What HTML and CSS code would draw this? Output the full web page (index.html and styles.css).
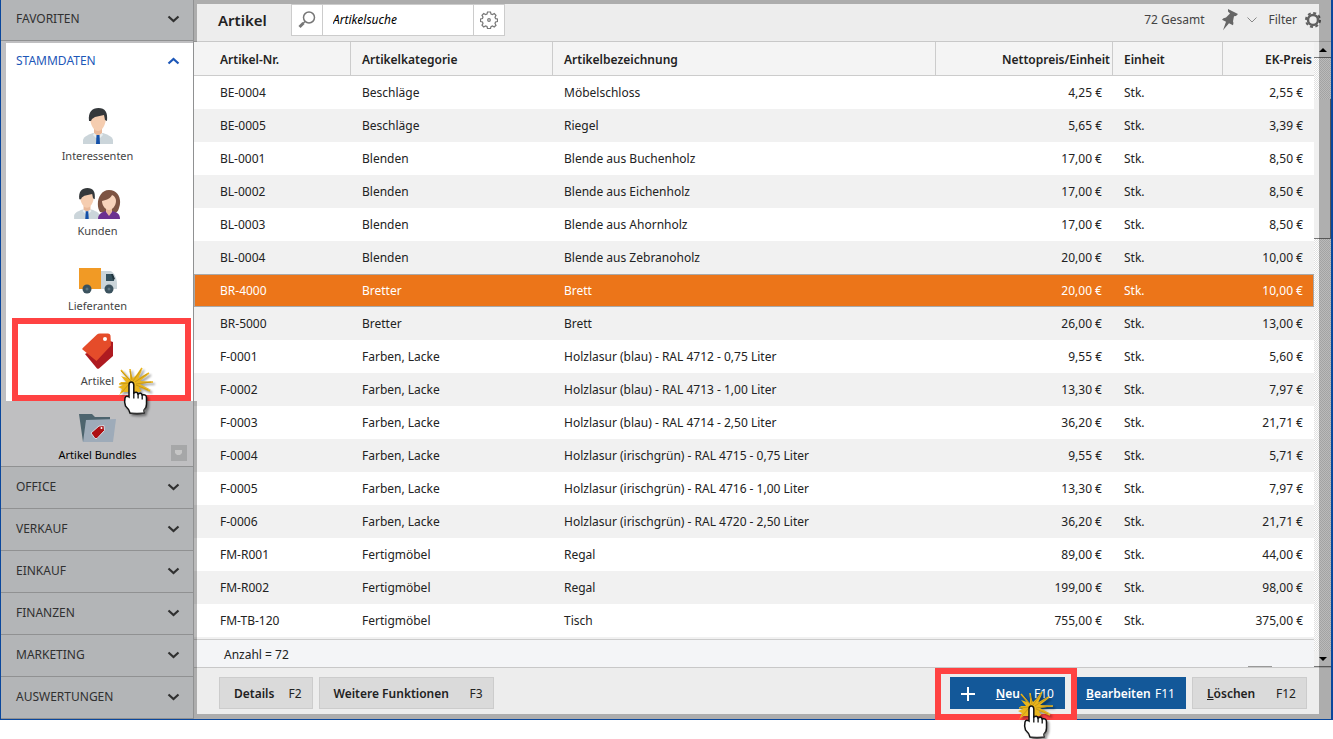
FILE: index.html
```html
<!DOCTYPE html>
<html lang="de">
<head>
<meta charset="utf-8">
<title>Artikel</title>
<link rel="stylesheet" href="styles.css">
</head>
<body>
<svg class="defs" aria-hidden="true">
  <symbol id="down" viewBox="0 0 12 8"><path d="M1 1.500 6 6l5-4.500" fill="none" stroke="currentColor" stroke-width="2.200"/></symbol>
  <symbol id="up" viewBox="0 0 12 8"><path d="M1 6.500 6 2l5 4.500" fill="none" stroke="currentColor" stroke-width="2.200"/></symbol>
  <symbol id="man" viewBox="0 0 30 36">
    <path d="M0 36v-4c1-4 7-6 10-7h10c3 1 9 3 10 7v4z" fill="#cbd5da"/>
    <path d="M11 21h8v5l-4 2-4-2z" fill="#e9b99a"/>
    <path d="m11 25 4 3 4-3 1 2-3 3h-4l-3-3z" fill="#e8eef0"/>
    <path d="M13.500 27h3l.5 9h-4z" fill="#1450a8"/>
    <path d="M7 9c0-6 4-8 8-8s8 2 8 8c0 8-4 14-8 14S7 17 7 9z" fill="#f5cdb0"/>
    <path d="M6 13C5 4 9 0 15.500 0S25 4 24 13l-2-1-1-5-9 2-3 2-1 2z" fill="#34383b"/>
  </symbol>
  <symbol id="woman" viewBox="0 0 24 29">
    <path d="M3 22C-2 14 2 0 12 0s13 10 10 18c-1 4-3 5-5 5H7z" fill="#7d5443"/>
    <path d="M1 29c0-5 4-7 8-8h6c5 1 8 3 8 8z" fill="#6b3190"/>
    <path d="M9 17h6v5l-3 4-3-4z" fill="#e9b99a"/>
    <path d="M5 11c5-1 9-3 10-6 3 1 4 4 4 6 0 5-4 9-7 9s-7-4-7-9z" fill="#f7d3bb"/>
  </symbol>
  <symbol id="truck" viewBox="0 0 38 26">
    <path d="M0 0h22v21H0z" fill="#f19a25"/><path d="M22 3h10c4 3 6 8 6 13v5H22z" fill="#cbd5da"/>
    <path d="M27 6h6l2 4v3h-8z" fill="#34505c"/><path d="M32 6h2l2 5-2 1z" fill="#20343d"/>
    <circle cx="8" cy="21" r="4.500" fill="#3b525e"/><circle cx="30" cy="21" r="4.500" fill="#3b525e"/>
    <circle cx="8" cy="21" r="1.500" fill="#5d7682"/><circle cx="30" cy="21" r="1.500" fill="#5d7682"/>
  </symbol>
  <symbol id="tags" viewBox="0 0 32 36">
    <path d="m3 21 25-13 3 1v14L17 35.500q-1 .5-2 0z" fill="#ae1a20"/>
    <path d="M15 1.500Q16 .5 18 .5l8 0q2 0 2.500 2l.5 10L14.500 28 .8 16.800q-1-.8 0-1.800z" fill="#e54c2a"/>
    <circle cx="23" cy="6" r="2" fill="#fff"/>
  </symbol>
  <symbol id="folder" viewBox="0 0 37 30">
    <path d="M0 1h13l3 3h15v25H4z" fill="#4d646e"/><path d="M7 7 37 6l-3 23H4z" fill="#9eabb9"/>
    <path d="m12 20 8-7 5-.5.500 5-7.500 8h-2z" fill="#ae0f12" stroke="#d3dce5" stroke-width="1"/><circle cx="22.500" cy="15" r="1" fill="#fff"/>
  </symbol>
  <symbol id="hand" viewBox="0 0 36 50">
    <path d="M12 13 12 6l3 6 9-8-4 9 11-5-9 7 13 1-13 2 11 6-12-3 1 5-18 0-3 4 3-7-4-2 5-2-3-3 6 0-5-6z" fill="#eab51c"/>
    <path d="M14 17 3 4m11 13L12 3m2 14L24 2M14 17 31 7M14 17l21-1M14 17l18 8M14 17 1 18m13-1L3 27m11-10 9 8" stroke="#eab51c" stroke-width="1.600"/>
    <path d="M13 15 3 5m11 9L12 5m3 10 8-11m-6 12L29 8M18 18l15-2M18 19l12 5M11 17l-9 1m9 0-7 8" stroke="#b08614" stroke-width=".6"/>
    <path d="M11 19q0-3 2.300-3t2.500 3v8q3.200-2 4.200 1 3.200-2 4.200 1 4.300-1 4.300 3v6q0 4-2.500 6v3q-7 1.500-14 0-1-4-4.500-7-1.500-4-.5-8 1-3 4-1z" fill="#fff" stroke="#111" stroke-width="1.500"/>
    <path d="M15.800 26v6.500m4.300-5v5m4.100-4v5" fill="none" stroke="#111" stroke-width="1.300"/>
    <path d="M12.500 46h12.500l2.500-5v4l-2 2.500h-12z" fill="#999" opacity=".5"/>
  </symbol>
</svg>

<div class="window">
  <nav class="sidebar" aria-label="Module">
    <button class="group first">FAVORITEN<svg><use href="#down"/></svg></button>
    <section class="open-group">
      <div class="bright">
        <button class="group active">STAMMDATEN<svg><use href="#up"/></svg></button>
        <a class="module" href="#"><svg class="ico-man"><use href="#man"/></svg><span>Interessenten</span></a>
        <a class="module" href="#"><span class="couple"><svg class="ico-man2"><use href="#man"/></svg><svg class="ico-woman"><use href="#woman"/></svg></span><span>Kunden</span></a>
        <a class="module" href="#"><svg class="ico-truck"><use href="#truck"/></svg><span>Lieferanten</span></a>
        <a class="module marked" href="#"><svg class="ico-tags"><use href="#tags"/></svg><span>Artikel</span><i class="callout callout-module"></i><svg class="hand hand-module"><use href="#hand"/></svg></a>
      </div>
      <a class="module bundles" href="#"><svg class="ico-folder"><use href="#folder"/></svg><span>Artikel Bundles</span><svg class="badge" viewBox="0 0 16 16"><path d="M0 0h16v16H0z" fill="#a6a7a8"/><path d="M4 5h7v3l-2 2H6L4 8z" fill="#c6c6c6"/></svg></a>
    </section>
    <button class="group">OFFICE<svg><use href="#down"/></svg></button>
    <button class="group">VERKAUF<svg><use href="#down"/></svg></button>
    <button class="group">EINKAUF<svg><use href="#down"/></svg></button>
    <button class="group">FINANZEN<svg><use href="#down"/></svg></button>
    <button class="group">MARKETING<svg><use href="#down"/></svg></button>
    <button class="group">AUSWERTUNGEN<svg><use href="#down"/></svg></button>
  </nav>

  <main class="main">
    <header class="toolbar">
      <h1>Artikel</h1>
      <div class="search">
        <button aria-label="Suchen"><svg width="18" height="18" viewBox="0 0 18 18" fill="none" stroke="#777"><circle cx="11" cy="6.500" r="5.500" stroke-width="1.500"/><path d="m7 10.500-2 2" stroke-width="1.500"/><path d="m5.500 12-4 4" stroke-width="3"/></svg></button>
        <input type="text" placeholder="Artikelsuche" aria-label="Artikelsuche">
        <button aria-label="Sucheinstellungen"><svg width="18" height="18" viewBox="0 0 18 18" fill="none" stroke="#777" stroke-width="1.200"><path d="M7.500 1h3l.5 2 1.500.6 1.800-1 1.700 1.700-1 2 .6 1.300 1.900.4v2.500l-2 .5-.5 1.500 1 1.800-1.800 1.700-1.800-1-1.400.6-.5 1.900H7.500l-.5-2-1.500-.5-1.800 1L2 14.200l1-1.800-.5-1.400-2-.5V8l2-.5.500-1.400-1-1.800L3.700 2.600l1.800 1L7 3z"/><circle cx="9" cy="9" r="1.300"/></svg></button>
      </div>
      <span class="total">72 Gesamt</span>
      <button class="pin" aria-label="Anheften"><svg width="18" height="22" viewBox="0 0 18 22" fill="#666"><path d="m7 0 10 5-2 2-2 .3-1 5q1 2 0 4l-4-2-6 7 3-8.500-4-2q1-2 4-2.300l4-4-2-2z"/></svg></button>
      <button class="more" aria-label="Mehr"><svg width="10" height="6" viewBox="0 0 10 6" fill="none" stroke="#888"><path d="m.5.5 4.500 4.500L9.500.5"/></svg></button>
      <button class="filter">Filter<svg width="16" height="16" viewBox="0 0 16 16" fill="none" stroke="#606060"><circle cx="8" cy="8" r="5" stroke-width="2.500"/><circle cx="8" cy="8" r="7" stroke-width="2" stroke-dasharray="3 2.498"/></svg></button>
    </header>

    <div class="content">
      <div class="listing">
        <table>
          <colgroup><col class="c-nr"><col class="c-kat"><col><col class="c-netto"><col class="c-einheit"><col class="c-ek"></colgroup>
          <thead><tr><th>Artikel-Nr.</th><th>Artikelkategorie</th><th>Artikelbezeichnung</th><th class="num">Nettopreis/Einheit</th><th>Einheit</th><th class="num">EK-Preis</th></tr></thead>
          <tbody>
            <tr><td>BE-0004</td><td>Beschläge</td><td>Möbelschloss</td><td class="num">4,25 €</td><td>Stk.</td><td class="num">2,55 €</td></tr>
            <tr><td>BE-0005</td><td>Beschläge</td><td>Riegel</td><td class="num">5,65 €</td><td>Stk.</td><td class="num">3,39 €</td></tr>
            <tr><td>BL-0001</td><td>Blenden</td><td>Blende aus Buchenholz</td><td class="num">17,00 €</td><td>Stk.</td><td class="num">8,50 €</td></tr>
            <tr><td>BL-0002</td><td>Blenden</td><td>Blende aus Eichenholz</td><td class="num">17,00 €</td><td>Stk.</td><td class="num">8,50 €</td></tr>
            <tr><td>BL-0003</td><td>Blenden</td><td>Blende aus Ahornholz</td><td class="num">17,00 €</td><td>Stk.</td><td class="num">8,50 €</td></tr>
            <tr><td>BL-0004</td><td>Blenden</td><td>Blende aus Zebranoholz</td><td class="num">20,00 €</td><td>Stk.</td><td class="num">10,00 €</td></tr>
            <tr class="selected"><td>BR-4000</td><td>Bretter</td><td>Brett</td><td class="num">20,00 €</td><td>Stk.</td><td class="num">10,00 €</td></tr>
            <tr><td>BR-5000</td><td>Bretter</td><td>Brett</td><td class="num">26,00 €</td><td>Stk.</td><td class="num">13,00 €</td></tr>
            <tr><td>F-0001</td><td>Farben, Lacke</td><td>Holzlasur (blau) - RAL 4712 - 0,75 Liter</td><td class="num">9,55 €</td><td>Stk.</td><td class="num">5,60 €</td></tr>
            <tr><td>F-0002</td><td>Farben, Lacke</td><td>Holzlasur (blau) - RAL 4713 - 1,00 Liter</td><td class="num">13,30 €</td><td>Stk.</td><td class="num">7,97 €</td></tr>
            <tr><td>F-0003</td><td>Farben, Lacke</td><td>Holzlasur (blau) - RAL 4714 - 2,50 Liter</td><td class="num">36,20 €</td><td>Stk.</td><td class="num">21,71 €</td></tr>
            <tr><td>F-0004</td><td>Farben, Lacke</td><td>Holzlasur (irischgrün) - RAL 4715 - 0,75 Liter</td><td class="num">9,55 €</td><td>Stk.</td><td class="num">5,71 €</td></tr>
            <tr><td>F-0005</td><td>Farben, Lacke</td><td>Holzlasur (irischgrün) - RAL 4716 - 1,00 Liter</td><td class="num">13,30 €</td><td>Stk.</td><td class="num">7,97 €</td></tr>
            <tr><td>F-0006</td><td>Farben, Lacke</td><td>Holzlasur (irischgrün) - RAL 4720 - 2,50 Liter</td><td class="num">36,20 €</td><td>Stk.</td><td class="num">21,71 €</td></tr>
            <tr><td>FM-R001</td><td>Fertigmöbel</td><td>Regal</td><td class="num">89,00 €</td><td>Stk.</td><td class="num">44,00 €</td></tr>
            <tr><td>FM-R002</td><td>Fertigmöbel</td><td>Regal</td><td class="num">199,00 €</td><td>Stk.</td><td class="num">98,00 €</td></tr>
            <tr><td>FM-TB-120</td><td>Fertigmöbel</td><td>Tisch</td><td class="num">755,00 €</td><td>Stk.</td><td class="num">375,00 €</td></tr>
          </tbody>
        </table>
        <div class="count">Anzahl = 72<i class="grip"></i></div>
      </div>
      <div class="scrollbar">
        <button aria-label="Nach oben"><svg width="8" height="4" viewBox="0 0 8 4"><path d="M0 4h8L4 0z"/></svg></button>
        <div class="track"><div class="thumb"></div></div>
        <button aria-label="Nach unten"><svg width="8" height="4" viewBox="0 0 8 4"><path d="M0 0h8L4 4z"/></svg></button>
      </div>
    </div>

    <footer class="actions">
      <button class="btn"><b>Details</b><span>F2</span></button>
      <button class="btn long"><b>Weitere Funktionen</b><span>F3</span></button>
      <div class="right">
        <div class="marked">
          <button class="btn primary wide new"><svg width="14" height="14" viewBox="0 0 14 14"><path d="M7 0v14M0 7h14" stroke="#fff" stroke-width="2"/></svg><b><u>N</u>eu</b><span>F10</span></button>
          <i class="callout callout-new"></i><svg class="hand hand-new"><use href="#hand"/></svg>
        </div>
        <button class="btn primary wide edit"><b><u>B</u>earbeiten</b><span>F11</span></button>
        <button class="btn wide"><b><u>L</u>öschen</b><span>F12</span></button>
      </div>
    </footer>
    <i class="shade shade-top"></i><i class="shade shade-left-top"></i><i class="shade shade-left"></i><i class="shade shade-right"></i><i class="shade shade-bottom"></i>
  </main>
</div>
</body>
</html>
```
FILE: styles.css
```css
* { box-sizing: border-box; }
body { min-height: 100vh; margin: 0; background: #fff; color: #222; font: 12px/16px "Noto Sans", "Open Sans", sans-serif; }
button { margin: 0; padding: 0; border: 0; background: none; color: inherit; font: inherit; }
a { color: inherit; text-decoration: none; }
.defs { display: block; width: 0; height: 0; position: absolute; }

.window { display: flex; border: 1px solid #0a479c; border-width: 0 2px 1px 1px; }

.sidebar { width: 193px; flex: none; background: #b3b5b7; border-right: 1px solid #909192; }
.group { display: flex; align-items: center; justify-content: space-between; width: 100%; height: 42px; padding: 0 13px 2px 15px; border-bottom: 1px solid #909192; color: #303030; text-align: left; }
.group.first { height: 41px; padding-bottom: 3px; }
.group svg { width: 13px; height: 8px; }
.group.active { height: 49px; padding: 0 13px 13px 10px; border: 0; color: #1c57b8; }
.open-group { padding-top: 2px; background: #bfbfc1; border-bottom: 1px solid #909192; }
.bright { height: 358px; margin-left: 5px; background: #fff; }
.module { display: flex; flex-direction: column; align-items: center; justify-content: flex-end; gap: 4px; height: 75px; padding: 0 0 3px 1px; color: #444; font-size: 11px; }
.bright .module { margin-left: -5px; }
.ico-man { width: 30px; height: 36px; }
.couple { display: flex; align-items: flex-end; }
.ico-man2 { width: 26px; height: 31px; margin-right: -3px; }
.ico-woman { width: 24px; height: 29px; }
.ico-truck { width: 38px; height: 26px; }
.ico-tags { width: 32px; height: 36px; }
.ico-folder { width: 37px; height: 30px; }
.bundles { position: relative; height: 65px; color: #000; }
.badge { position: absolute; right: 6px; bottom: 5px; width: 16px; height: 16px; }

.marked { position: relative; }
.callout { position: absolute; border: 6px solid #ff4242; }
.callout-module { inset: 1px 2px -9px 11px; }
.callout-new { inset: -9px -12px -11px -15px; }
.hand { position: absolute; width: 36px; height: 50px; filter: drop-shadow(2px 2px 1px rgba(0, 0, 0, .4)); }
.hand-module { left: 117px; top: 49px; z-index: 2; }
.hand-new { left: 68px; top: 13px; z-index: 2; }

.main { position: relative; flex: 1; min-width: 0; display: flex; flex-direction: column; background: #ededed; }
.toolbar { display: flex; align-items: center; height: 41px; padding: 4px 10px 5px 24px; color: #444; }
.toolbar h1 { width: 73px; margin: 0; color: #222; font-size: 15px; line-height: 22px; font-weight: 600; }
.search { display: flex; height: 32px; border: 1px solid #ccc; background: #fff; }
.search button { display: grid; place-items: center; width: 30px; }
.search input { width: 152px; padding: 0 10px; border: solid #ccc; border-width: 0 1px; font: italic 12px/16px "Noto Sans", "Open Sans", sans-serif; color: #000; outline: 0; }
.search input::placeholder { color: #000; opacity: 1; }
.total { margin-left: auto; }
.pin { display: flex; margin-left: 16px; }
.more { display: flex; margin: 0 12px 0 8px; }
.filter { display: flex; align-items: center; gap: 8px; }

.content { display: flex; border: solid #c8c8c8; border-width: 1px 0; }
.listing { flex: 1; min-width: 0; background: #f1f1f1; }
table { width: 100%; table-layout: fixed; border-collapse: separate; border-spacing: 0; }
.c-nr { width: 157px; } .c-kat { width: 202px; } .c-netto { width: 177px; } .c-einheit { width: 110px; } .c-ek { width: 91px; }
th { height: 34px; padding: 2px 2px 0 11px; border: solid #ccc; border-width: 0 1px 1px 0; background: #f4f4f4; font-weight: 600; text-align: left; }
th:last-child { border-right: 0; }
td { height: 33px; padding: 0 11px; }
th:first-child, td:first-child { padding-left: 26px; }
tbody tr { background: #fff; }
tbody tr:nth-child(even) { background: #f1f1f1; }
tbody .selected { background: #ec7519; color: #fff; outline: 1px solid #a9a9a9; outline-offset: -1px; }
th.num, td.num { text-align: right; }
.count { position: relative; height: 28px; margin-top: 2px; padding: 7px 30px 5px; border-top: 1px solid #ccc; background: #f4f5f7; }
.grip { position: absolute; right: 42px; bottom: 0; width: 24px; height: 1px; background: #999; }
.scrollbar { display: flex; flex-direction: column; width: 17px; background: #f4f4f4; }
.scrollbar button { display: grid; place-items: center; height: 16px; border-bottom: 1px solid #777; background: #f0f0f0; }
.track { flex: 1; padding-top: 41px; background: repeating-conic-gradient(#fff 0 25%, #e0e0e0 0 50%) 0 0 / 2px 2px; }
.thumb { height: 140px; border: 1px solid #777; border-width: 0 1px 1px 0; background: #f0f0f0; }

.actions { display: flex; flex: 1; gap: 6px; padding: 9px 24px 10px 25px; }
.btn { display: flex; align-items: center; justify-content: space-between; gap: 14px; height: 32px; padding: 1px 10px 0 14px; border: 1px solid #ccc; background: #dadada; white-space: nowrap; }
.btn b { font-weight: 600; }
.btn.wide { width: 115px; }
.btn.long { min-width: 175px; }
.btn.primary { border-color: #135899; background: #135899; color: #fff; }
.btn.new { padding-left: 10px; }
.btn.new b { margin-left: auto; }
.btn.edit { gap: 4px; }
.right { display: flex; gap: 6px; margin-left: auto; }
.right .marked { z-index: 1; }

.shade { position: absolute; background: rgba(0, 0, 0, .27); pointer-events: none; }
.shade-top { inset: 0 0 auto; height: 4px; }
.shade-left-top { left: 0; top: 4px; width: 3px; height: 38px; }
.shade-left { left: 0; top: 401px; bottom: 5px; width: 3px; }
.shade-right { right: 0; top: 4px; bottom: 5px; width: 12px; }
.shade-bottom { inset: auto 0 0; height: 5px; }
```
